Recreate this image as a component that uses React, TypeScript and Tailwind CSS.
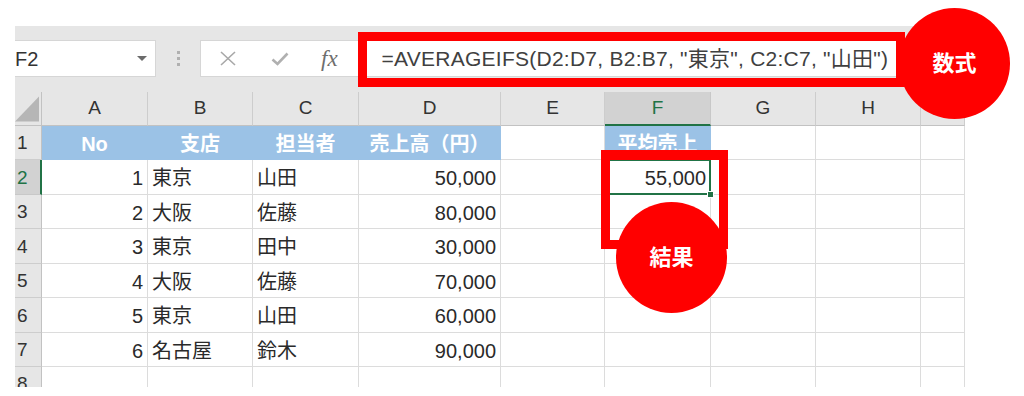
const font = "font-['Liberation_Sans','Noto_Sans_CJK_JP',sans-serif]";

const columns = ["A", "B", "C", "D", "E", "F", "G", "H", ""];

const sales = [
  { no: 1, branch: "東京", person: "山田", amount: "50,000" },
  { no: 2, branch: "大阪", person: "佐藤", amount: "80,000" },
  { no: 3, branch: "東京", person: "田中", amount: "30,000" },
  { no: 4, branch: "大阪", person: "佐藤", amount: "70,000" },
  { no: 5, branch: "東京", person: "山田", amount: "60,000" },
  { no: 6, branch: "名古屋", person: "鈴木", amount: "90,000" },
];

function ColumnHeader({ label }: { label: string }) {
  if (label === "F") {
    return (
      <div className="flex items-center justify-center border-r border-b-2 border-r-[#c8c8c8] border-b-[#217346] bg-[#d2d2d2] text-[19px] text-[#217346]">
        {label}
      </div>
    );
  }
  return (
    <div className="flex items-center justify-center border-r border-b border-r-[#cdcdcd] border-b-[#c2c2c2] bg-[#e6e6e6] text-[19px] text-[#333]">
      {label}
    </div>
  );
}

function RowHeader({ n }: { n: number }) {
  if (n === 2) {
    return (
      <div className="flex items-center border-r-2 border-b border-r-[#217346] border-b-[#c8c8c8] bg-[#d2d2d2] pl-[2px] pt-[2px] text-[19px] text-[#217346]">
        {n}
      </div>
    );
  }
  return (
    <div className="flex items-center border-r border-b border-r-[#c2c2c2] border-b-[#cdcdcd] bg-[#e6e6e6] pl-[2px] pt-[2px] text-[19px] text-[#333]">
      {n}
    </div>
  );
}

function Cell({ children, right }: { children?: React.ReactNode; right?: boolean }) {
  return (
    <div
      className={
        right
          ? "flex items-center justify-end border-r border-b border-[#dcdcdc] bg-white pr-[4px] pt-[2px] text-[20px] text-[#2a2a2a]"
          : "flex items-center border-r border-b border-[#dcdcdc] bg-white pl-[4px] pt-[2px] text-[20px] text-[#2a2a2a]"
      }
    >
      {children}
    </div>
  );
}

function HeadCell({ children }: { children?: React.ReactNode }) {
  return (
    <div className="flex items-center justify-center border-r border-b border-[#9bc2e6] bg-[#9bc2e6] pt-[2px] text-[20px] font-bold text-white">
      {children}
    </div>
  );
}

function Toolbar() {
  return (
    <div className="flex h-[66px] items-start bg-[#e6e6e6] pt-[14px]">
      <div className="flex h-[37px] w-[141px] items-center justify-between border border-l-0 border-[#d6d6d6] bg-white pr-[8px] text-[20px] text-[#333]">
        <span>F2</span>
        <svg width="10" height="6" viewBox="0 0 10 6">
          <polygon points="0,0 10,0 5,5" fill="#6b6b6b" />
        </svg>
      </div>
      <div className="flex h-[37px] w-[44px] flex-col items-center justify-center gap-[3px]">
        <span className="h-[3px] w-[3px] bg-[#b0b0b0]" />
        <span className="h-[3px] w-[3px] bg-[#b0b0b0]" />
        <span className="h-[3px] w-[3px] bg-[#b0b0b0]" />
      </div>
      <div className="flex h-[37px] flex-1 items-center border border-r-0 border-[#d6d6d6] bg-white">
        <svg className="ml-[19px]" width="16" height="15" viewBox="0 0 16 15">
          <path d="M1 1 L15 14 M15 1 L1 14" stroke="#a8a8a8" strokeWidth="1.6" fill="none" />
        </svg>
        <svg className="ml-[35px]" width="18" height="14" viewBox="0 0 18 14">
          <path d="M1.5 7.5 L6.5 12 L16.5 1.5" stroke="#b0b0b0" strokeWidth="2.6" fill="none" />
        </svg>
        <span className="ml-[32px] font-['Liberation_Serif',serif] text-[23px] italic leading-none text-[#6e6e6e]">
          fx
        </span>
        <span className="ml-[44px] text-[21px] tracking-[0.25px] text-[#404040]">
          =AVERAGEIFS(D2:D7, B2:B7, "東京", C2:C7, "山田")
        </span>
      </div>
    </div>
  );
}

export default function App() {
  return (
    <div className={`relative h-[396px] w-[1024px] overflow-hidden bg-white ${font}`}>
      <div className="ml-[15px] mt-[26px] w-[950px]">
        <Toolbar />

        <div className="grid h-[295px] grid-cols-[27px_106px_105px_106px_142px_104px_106px_105px_105px_44px] grid-rows-[34px_34px_35px_34px_35px_34px_35px_34px_34px] overflow-hidden">
          <div className="flex items-end justify-end border-r border-b border-r-[#c2c2c2] border-b-[#c2c2c2] bg-[#e6e6e6] pr-[2px] pb-[3px]">
            <svg width="25" height="26" viewBox="0 0 25 26">
              <polygon points="25,0 25,26 0,26" fill="#b6b6b6" />
            </svg>
          </div>
          {columns.map((c, i) => (
            <ColumnHeader key={i} label={c} />
          ))}

          <RowHeader n={1} />
          <HeadCell>No</HeadCell>
          <HeadCell>支店</HeadCell>
          <HeadCell>担当者</HeadCell>
          <HeadCell>売上高（円）</HeadCell>
          <Cell />
          <HeadCell>平均売上</HeadCell>
          <Cell />
          <Cell />
          <Cell />

          {sales.map((row, i) => (
            <div key={row.no} className="contents">
              <RowHeader n={i + 2} />
              <Cell right>{row.no}</Cell>
              <Cell>{row.branch}</Cell>
              <Cell>{row.person}</Cell>
              <Cell right>{row.amount}</Cell>
              <Cell />
              {i === 0 ? (
                <div className="relative flex items-center justify-end border-r border-b border-[#dcdcdc] bg-white pr-[4px] pt-[2px] text-[20px] text-[#2a2a2a]">
                  55,000
                  <div className="absolute -top-[1px] -left-[1px] -right-[1px] -bottom-[1px] border-2 border-[#217346]" />
                  <div className="absolute -right-[4px] -bottom-[4px] h-[7px] w-[7px] border border-white bg-[#217346]" />
                </div>
              ) : (
                <Cell />
              )}
              <Cell />
              <Cell />
              <Cell />
            </div>
          ))}

          <RowHeader n={8} />
          {columns.map((_, i) => (
            <Cell key={i} />
          ))}
        </div>
      </div>

      {/* formula callout */}
      <div className="absolute left-[358px] top-[32px] h-[55px] w-[547px] border-[9px] border-[#ff0000]" />
      <div className="absolute left-[899px] top-[8px] flex h-[111px] w-[111px] items-center justify-center rounded-full bg-[#ff0000] text-[22px] font-bold text-white">
        数式
      </div>

      {/* result callout */}
      <div className="absolute left-[601px] top-[150px] h-[99px] w-[127px] border-[9px] border-t-[10px] border-[#ff0000]" />
      <div className="absolute left-[616px] top-[202px] flex h-[111px] w-[111px] items-center justify-center rounded-full bg-[#ff0000] text-[22px] font-bold text-white">
        結果
      </div>
    </div>
  );
}
